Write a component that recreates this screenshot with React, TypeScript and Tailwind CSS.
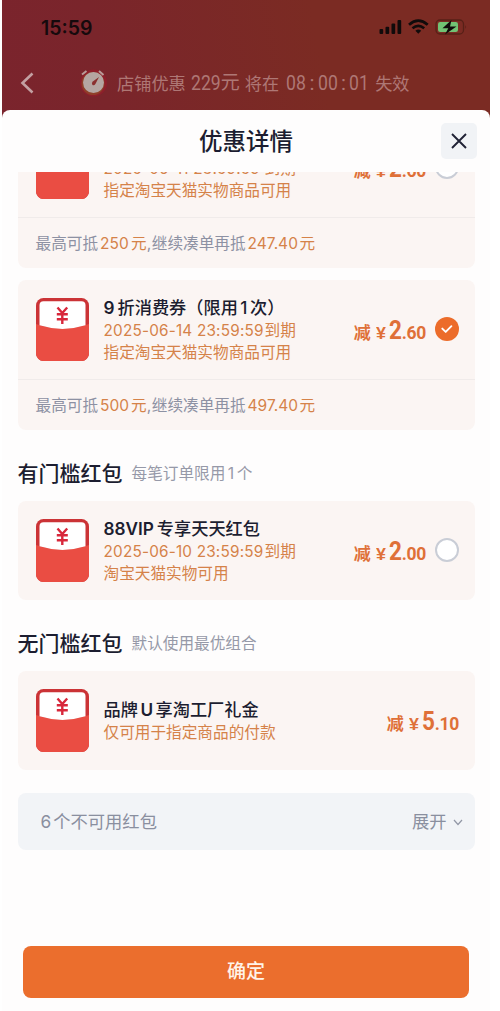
import type { ReactNode } from "react";

function RedPacket() {
  return (
    <svg className="h-[63px] w-[53px] shrink-0" viewBox="0 0 53 63">
      <rect width="53" height="63" rx="7.5" fill="#cb3336" />
      <path d="M0 26 Q26.500 35 53 26 V55.500 A7.500 7.500 0 0 1 45.500 63 H7.500 A7.500 7.500 0 0 1 0 55.500Z" fill="#ea4d43" />
      <path d="M3.500 7 Q3.500 3.200 7.500 3.200 H45.500 Q49.500 3.200 49.500 7 V27.300 Q26.500 34.500 3.500 27.300Z" fill="#fff" />
      <path d="M21.500 9.500 L26.300 15 L31.200 9.500 M26.300 14.500 V26 M20.800 16.300 H31.800 M20.800 21.200 H31.800" fill="none" stroke="#d8273b" strokeWidth="2.400" />
    </svg>
  );
}

function Radio({ checked }: { checked?: boolean }) {
  if (!checked) return <span className="size-6 shrink-0 rounded-full border-2 border-[#c9cdd6] bg-white" />;
  return (
    <span className="flex size-6 shrink-0 items-center justify-center rounded-full bg-[#ec6c2a]">
      <svg className="size-6" viewBox="0 0 24 24">
        <path d="M7.300 11.600 L10.700 14.900 L16.400 9.200" fill="none" stroke="#fff" strokeWidth="1.900" strokeLinecap="round" strokeLinejoin="round" />
      </svg>
    </span>
  );
}

function Price({ whole, cents }: { whole: string; cents: string }) {
  return (
    <span className="flex items-baseline pt-[5px] whitespace-nowrap font-bold text-[#df7038]">
      <span className="text-[17px]">减</span>
      <span className="ml-[5px] w-[12px] font-['Liberation_Sans'] text-[17px]">
        <span className="inline-block origin-left scale-x-105">{"\u00a5"}</span>
      </span>
      <span className="ml-px w-[13px] font-['Roboto'] text-[25px] leading-7">
        <span className="inline-block origin-left scale-x-90">{whole}</span>
      </span>
      <span className="font-['Roboto'] text-[17.5px] tracking-[-0.3px]">.{cents}</span>
    </span>
  );
}

type CouponProps = {
  title?: ReactNode;
  date?: string;
  note: string;
  whole: string;
  cents: string;
  radio?: "on" | "off";
  used?: string;
  more?: string;
};

function Coupon({ title, date, note, whole, cents, radio, used, more }: CouponProps) {
  return (
    <section className="shrink-0 rounded-[8px] bg-[#fbf5f3]">
      <div className="flex h-[99px] items-center pr-[15.5px] pb-px pl-[18px]">
        <RedPacket />
        <div className="ml-[15px] flex-1 pt-[2px] whitespace-nowrap text-[15.65px] leading-[22.5px] text-[#d58249]">
          <h3 className="h-6 text-[17.2px] leading-6 font-medium text-[#1c1d30]">{title}</h3>
          {date && (
            <p className="flex">
              <span className="w-[161px] font-['Inter'] text-[15.3px] tracking-[0.2px]">{date}</span>到期
            </p>
          )}
          <p>{note}</p>
        </div>
        <div className="flex items-center gap-[9px]">
          <Price whole={whole} cents={cents} />
          {radio && <Radio checked={radio === "on"} />}
        </div>
      </div>
      {used && (
        <div className="flex h-[51px] items-center border-t-[1.5px] border-[#f0ebea] pt-[2px] pl-[18px] text-[15.65px] whitespace-nowrap text-[#8d91a3]">
          <span>最高可抵</span>
          <span className="ml-[2px] w-[31px] font-['Inter'] text-[15.5px] text-[#d58249]">{used}</span>
          <span className="text-[#d58249]">元</span>
          <span className="w-[5px]">,</span>
          <span>继续凑单再抵</span>
          <span className="ml-[2px] w-[52px] font-['Inter'] text-[15.5px] text-[#d58249]">{more}</span>
          <span className="text-[#d58249]">元</span>
        </div>
      )}
    </section>
  );
}

function Heading({ title, hint }: { title: string; hint: ReactNode }) {
  return (
    <div className="flex h-[30px] shrink-0 items-center gap-[9px] pt-[2px]">
      <h2 className="text-[21px] leading-[30px] font-medium text-[#1c1d30]">{title}</h2>
      <span className="text-[15.65px] text-[#9699a8]">{hint}</span>
    </div>
  );
}

function StatusIcons() {
  return (
    <svg className="h-[20px] w-[90px]" viewBox="0 0 90 20">
      <g fill="#100b0b">
        <rect x="2.500" y="11" width="3.700" height="5" rx="1" />
        <rect x="8.500" y="8.700" width="3.700" height="7.300" rx="1" />
        <rect x="14.500" y="5.500" width="3.700" height="10.500" rx="1" />
        <rect x="20.500" y="2" width="3.700" height="14" rx="1" />
      </g>
      <g transform="translate(1.500 0)">
        <g fill="none" stroke="#100b0b" strokeWidth="2.700">
          <path d="M30.500 6.700 Q39.800 -1.500 49.200 6.700" />
          <path d="M34 10.200 Q39.800 5.500 45.700 10.200" />
        </g>
        <path d="M36.900 12.700 Q39.800 10.500 42.700 12.700 L39.800 15.800Z" fill="#100b0b" />
      </g>
      <rect x="59" y="2" width="27.500" height="14" rx="4" fill="none" stroke="#572017" strokeWidth="1.300" />
      <path d="M88.300 7 Q90 9 88.300 11Z" fill="#572017" />
      <rect x="61" y="4" width="20" height="10" rx="2.200" fill="#72c274" />
      <path d="M74.500 2 L65.500 10.300 H71.300 L68 16.500 L79.500 8.400 H73Z" fill="#100b0b" />
    </svg>
  );
}

function Clock() {
  return (
    <svg className="h-[30px] w-[30px]" viewBox="0 0 30 30">
      <circle cx="15.500" cy="15" r="13.500" fill="#8e1f2b" />
      <path d="M4 6.500 L8.500 3 M21 3 L25.500 7" stroke="#b99b98" strokeWidth="2" />
      <circle cx="15" cy="15.500" r="11.500" fill="#8f3f29" />
      <circle cx="15.500" cy="14.500" r="10.500" fill="#b5a6a2" />
      <path d="M21 9 L17.400 16 Q16 18 14.300 16.700 Q13.200 15 14.800 13.500Z" fill="#8b302f" />
    </svg>
  );
}

export default function App() {
  return (
    <main className="h-[1011px] w-[500px] overflow-hidden bg-white pl-[2px] font-['Inter','Noto_Sans_CJK_SC',sans-serif]">
      <div className="flex h-full w-[488px] flex-col bg-[linear-gradient(80deg,#7b222f_0px,#7a252b_260px,#7b2b23_480px)]">
        <header className="h-[110px] shrink-0">
          <div className="flex h-[55px] items-center justify-between pr-[23px] pl-[39px]">
            <span className="font-['Inter'] text-[19.5px] leading-6 font-semibold text-[#160a0d]">15:59</span>
            <StatusIcons />
          </div>
          <div className="flex h-[55px] items-center pl-[17px] text-[17.2px] whitespace-nowrap text-[#ae7775]">
            <svg className="h-6 w-4" viewBox="0 0 16 24">
              <path d="M13.500 2.500 L3.500 12 L13.500 21.500" fill="none" stroke="#c3a0a2" strokeWidth="2.600" />
            </svg>
            <span className="ml-[43px]"><Clock /></span>
            <span className="ml-[9px] pt-[2px]">店铺优惠</span>
            <span className="ml-[5px] w-[30px] pt-[2px]"><span className="inline-block origin-left scale-x-[.86] font-['Roboto'] text-[20.5px]">229</span></span>
            <span className="pt-px text-[19px]">元</span>
            <span className="ml-[5px] pt-[2px]">将在</span>
            <span className="ml-[7px] flex w-[81px] justify-between pt-[2px] font-['Roboto'] text-[20.5px]">
              <span className="w-5"><span className="inline-block origin-left scale-x-[.86]">08</span></span>
              <span>:</span>
              <span className="w-5"><span className="inline-block origin-left scale-x-[.86]">00</span></span>
              <span>:</span>
              <span className="w-[18px]"><span className="inline-block origin-left scale-x-[.86]">01</span></span>
            </span>
            <span className="ml-[8px] pt-[2px]">失效</span>
          </div>
        </header>
        <div className="flex min-h-0 flex-1 flex-col rounded-t-[8px] bg-[#fefdfd]">
          <div className="grid h-[62px] shrink-0 grid-cols-[1fr_auto_1fr] items-center px-[13px]">
            <h1 className="col-start-2 pt-[2px] text-[23.5px] leading-8 font-medium text-[#1c1d30]">优惠详情</h1>
            <button className="flex size-9 items-center justify-center justify-self-end rounded-[5px] bg-[#f1f3f6]" aria-label="关闭">
              <svg className="size-4" viewBox="0 0 16 16">
                <path d="M1 1 L15 15 M15 1 L1 15" fill="none" stroke="#202235" strokeWidth="1.900" />
              </svg>
            </button>
          </div>
          <div className="flex min-h-0 flex-1 flex-col overflow-hidden px-[15.5px]">
            <div className="-mt-[54px] flex shrink-0 flex-col gap-3">
              <Coupon date="2025-06-11 23:59:59" note="指定淘宝天猫实物商品可用" whole="2" cents="60" radio="off" used="250" more="247.40" />
              <Coupon
                title={<><span className="mr-[3px] font-semibold">9</span>折消费券（限用<span className="mx-[2.5px]">1</span>次）</>}
                date="2025-06-14 23:59:59"
                note="指定淘宝天猫实物商品可用"
                whole="2"
                cents="60"
                radio="on"
                used="500"
                more="497.40"
              />
            </div>
            <div className="mt-[28px] flex shrink-0 flex-col gap-[13px]">
              <Heading title="有门槛红包" hint={<>每笔订单限用<span className="mx-[2.5px]">1</span>个</>} />
              <Coupon
                title={<><span className="mr-[3px] font-semibold">88VIP</span>专享天天红包</>}
                date="2025-06-10 23:59:59"
                note="淘宝天猫实物可用"
                whole="2"
                cents="00"
                radio="off"
              />
            </div>
            <div className="mt-[28px] flex shrink-0 flex-col gap-[13px]">
              <Heading title="无门槛红包" hint="默认使用最优组合" />
              <Coupon title={<>品牌<span className="mx-[2.5px] font-semibold">U</span>享淘工厂礼金</>} note="仅可用于指定商品的付款" whole="5" cents="10" />
            </div>
            <button className="mt-[23px] flex h-[57px] shrink-0 items-center justify-between rounded-[8px] bg-[#f2f4f7] pt-px pr-[12px] pl-[23px] text-[17.3px] text-[#8a8f9f]">
              <span><span className="mr-[2px]">6</span>个不可用红包</span>
              <span className="flex items-center gap-[6px]">
                展开
                <svg className="h-[7px] w-[10px]" viewBox="0 0 10 7">
                  <path d="M1 1 L5 5.500 L9 1" fill="none" stroke="#9297a6" strokeWidth="1.200" />
                </svg>
              </span>
            </button>
          </div>
          <footer className="shrink-0 pr-[21px] pb-[13px] pl-[21px]">
            <button className="flex h-[52px] w-full items-center justify-center rounded-[8px] bg-[#eb6e2d] pt-px text-[19px] font-medium text-[#fff4e9]">确定</button>
          </footer>
        </div>
      </div>
    </main>
  );
}
